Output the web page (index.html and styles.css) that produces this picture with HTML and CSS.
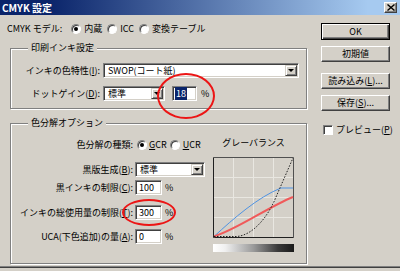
FILE: index.html
```html
<!DOCTYPE html>
<html lang="ja">
<head>
<meta charset="utf-8">
<title>CMYK 設定</title>
<link rel="stylesheet" href="styles.css">
</head>
<body>
<div class="window">
  <div class="titlebar">
    <span class="title">CMYK 設定</span>
    <span class="close"><svg width="8" height="7" viewBox="0 0 8 7"><path d="M0.5 0.5 L7.5 6.5 M7.5 0.5 L0.5 6.5" stroke="#000" stroke-width="1.4" fill="none"/></svg></span>
  </div>
  <div class="content">
    <div class="main">
      <div class="model-row">
        <span>CMYK モデル:</span>
        <span class="opt opt-first"><span class="radio checked"></span><span>内蔵</span></span>
        <span class="opt"><span class="radio"></span><span>ICC</span></span>
        <span class="opt"><span class="radio"></span><span>変換テーブル</span></span>
      </div>

      <fieldset class="group group-ink">
        <legend>印刷インキ設定</legend>
        <div class="form-ink">
          <label class="lbl">インキの色特性(<u>I</u>):</label>
          <div class="combo combo-wide"><span class="combo-text">SWOP(コート紙)</span><span class="drop"></span></div>
          <label class="lbl">ドットゲイン(<u>D</u>):</label>
          <div class="ctrl-line">
            <div class="combo combo-dot"><span class="combo-text">標準</span><span class="drop"></span></div>
            <div class="field field-dot"><span class="sel">18</span></div>
            <span class="pct pct-dot">%</span>
          </div>
        </div>
      </fieldset>

      <fieldset class="group group-sep">
        <legend>色分解オプション</legend>
        <div class="sep-body">
          <div class="form-sep">
            <div class="row row-radio">
              <span class="lbl lbl-sep">色分解の種類:</span>
              <span class="opt opt-sep"><span class="radio checked"></span><span><u>G</u>CR</span></span>
              <span class="opt opt-sep2"><span class="radio"></span><span><u>U</u>CR</span></span>
            </div>
            <div class="row row-b">
              <span class="lbl lbl-sep">黒版生成(<u>B</u>):</span>
              <div class="combo combo-black"><span class="combo-text">標準</span><span class="drop"></span></div>
            </div>
            <div class="row row-c">
              <span class="lbl lbl-sep">黒インキの制限(<u>C</u>):</span>
              <div class="field field-num">100</div>
              <span class="pct">%</span>
            </div>
            <div class="row row-t">
              <span class="lbl lbl-sep">インキの総使用量の制限(<u>T</u>):</span>
              <div class="field field-num">300</div>
              <span class="pct">%</span>
            </div>
            <div class="row row-a">
              <span class="lbl lbl-sep">UCA(下色追加)の量(<u>A</u>):</span>
              <div class="field field-num">0</div>
              <span class="pct">%</span>
            </div>
          </div>
          <div class="balance">
            <div class="balance-title">グレーバランス</div>
            <svg class="graph" width="81" height="81" viewBox="0 0 81 81">
              <rect x="0" y="0" width="81" height="81" fill="#d4d0c8"/>
              <g stroke="#e9e7e1" stroke-width="1">
                <line x1="20.5" y1="1" x2="20.5" y2="80"/>
                <line x1="40.5" y1="1" x2="40.5" y2="80"/>
                <line x1="60.5" y1="1" x2="60.5" y2="80"/>
                <line x1="1" y1="20.5" x2="80" y2="20.5"/>
                <line x1="1" y1="40.5" x2="80" y2="40.5"/>
                <line x1="1" y1="60.5" x2="80" y2="60.5"/>
              </g>
              <path d="M0.5 0.5 H80.5 V80.5" fill="none" stroke="#505050"/>
              <path d="M0.5 0.5 V80.5 H80.5" fill="none" stroke="#202020"/>
              <path d="M1 79.5 C20 62, 45 40, 68 31 L80 31" fill="none" stroke="#4f93e3" stroke-width="1"/>
              <path d="M1 79.5 C25 72, 55 50, 80 40" fill="none" stroke="#f05a5a" stroke-width="2"/>
              <path d="M1 79.5 L24 79.5 C40 78, 55 60, 63 40 L80 1" fill="none" stroke="#202020" stroke-width="1" stroke-dasharray="1.5 1.5"/>
            </svg>
            <div class="ramp"></div>
          </div>
        </div>
      </fieldset>
    </div>

    <div class="side">
      <div class="btn btn-default">OK</div>
      <div class="btn btn-reset">初期値</div>
      <div class="btn btn-load">読み込み(<u>L</u>)...</div>
      <div class="btn btn-save">保存(<u>S</u>)...</div>
      <div class="check-row"><span class="check"></span><span>プレビュー(<u>P</u>)</span></div>
    </div>
  </div>

  <span class="ring ring-dot"></span>
  <span class="ring ring-total"></span>
</div>
</body>
</html>
```

FILE: styles.css
```css
* { box-sizing: border-box; }

html, body {
  margin: 0;
  padding: 0;
  background: #d4d0c8;
}

body {
  font-family: "Noto Sans CJK JP", "Noto Sans", sans-serif;
  font-size: 9px;
  line-height: 12px;
  color: #000;
}

u { text-decoration: underline; text-underline-offset: 1px; }

.window {
  position: relative;
  width: 400px;
  height: 268px;
  background: #d4d0c8;
  border-bottom: 1px solid #404040;
  box-shadow: inset 0 -1px 0 #808080;
}

.titlebar {
  height: 15px;
  display: flex;
  align-items: center;
  justify-content: space-between;
  padding: 0 3px 0 2px;
  background: linear-gradient(90deg, #0a246a 0%, #0a246a 12%, #a6caf0 92%);
}

.title {
  color: #fff;
  font-weight: bold;
  font-size: 10px;
  line-height: 12px;
}

.close {
  width: 13px;
  height: 11px;
  display: flex;
  align-items: center;
  justify-content: center;
  background: #d4d0c8;
  border: 1px solid;
  border-color: #fff #404040 #404040 #fff;
  box-shadow: inset -1px -1px 0 #808080;
}

.content { display: flex; }

.main {
  width: 300px;
  margin-left: 7px;
}

.model-row {
  display: flex;
  align-items: center;
  height: 12px;
  margin-top: 8px;
}

.opt {
  display: flex;
  align-items: center;
  gap: 3px;
  margin-left: 5px;
}

.opt-first { margin-left: 9px; }

.radio {
  flex: none;
  width: 10px;
  height: 10px;
  border-radius: 50%;
  background: #fff;
  border: 1px solid;
  border-color: #808080 #fff #fff #808080;
  box-shadow: inset 1px 1px 0 #404040;
  display: flex;
  align-items: center;
  justify-content: center;
}

.radio.checked::after {
  content: "";
  width: 4px;
  height: 4px;
  border-radius: 50%;
  background: #000;
}

/* group boxes */
.group {
  margin: 0 0 0 3px;
  padding: 0;
  min-width: 0;
  width: 297px;
  border: 1px solid #808080;
  box-shadow: inset 1px 1px 0 #fff, 1px 1px 0 #fff;
}

.group legend {
  margin-left: 17px;
  padding: 0 3px;
  height: 12px;
  line-height: 12px;
  background: #d4d0c8;
}

.group-ink { margin-top: 7px; }
.group-sep { margin-top: 8px; }

.form-ink {
  display: grid;
  grid-template-columns: 89px auto;
  column-gap: 3px;
  row-gap: 8px;
  align-items: center;
  padding: 9px 0 7px;
}

.lbl {
  text-align: right;
  white-space: nowrap;
}

.ctrl-line {
  display: flex;
  align-items: center;
}

/* combo boxes and fields */
.combo {
  display: flex;
  align-items: center;
  height: 15px;
  background: #fff;
  border: 1px solid;
  border-color: #808080 #fff #fff #808080;
  box-shadow: inset 1px 1px 0 #404040, inset -1px -1px 0 #d4d0c8;
}

.combo-wide { width: 196px; }
.combo-dot { width: 62px; }
.combo-black { width: 70px; }

.combo-text {
  flex: 1;
  padding-left: 4px;
  line-height: 13px;
  white-space: nowrap;
  overflow: hidden;
}

.drop {
  flex: none;
  width: 12px;
  height: 11px;
  margin-right: 1px;
  display: flex;
  align-items: center;
  justify-content: center;
  background: #d4d0c8;
  border: 1px solid;
  border-color: #d4d0c8 #404040 #404040 #d4d0c8;
  box-shadow: inset 1px 1px 0 #fff, inset -1px -1px 0 #808080;
}

.drop::after {
  content: "";
  border-left: 3px solid transparent;
  border-right: 3px solid transparent;
  border-top: 3px solid #000;
}

.field {
  height: 15px;
  background: #fff;
  border: 1px solid;
  border-color: #808080 #fff #fff #808080;
  box-shadow: inset 1px 1px 0 #404040, inset -1px -1px 0 #d4d0c8;
  padding-left: 3px;
  line-height: 13px;
}

.field-dot {
  width: 25px;
  margin-left: 7px;
  padding-left: 2px;
}

.sel {
  background: #0a246a;
  color: #fff;
  padding: 0 1px;
}

.field-num { width: 27px; }

.pct { margin-left: 3px; }
.pct-dot { margin-left: 4px; }

/* color separation */
.sep-body {
  display: flex;
  align-items: flex-start;
  padding-bottom: 11px;
}

.form-sep {
  width: 202px;
  margin-top: 10px;
  display: flex;
  flex-direction: column;
}

.row {
  display: flex;
  align-items: center;
  height: 15px;
}

.row-radio { height: 12px; }
.row-b { margin-top: 11px; }
.row-c { margin-top: 3px; }
.row-t { margin-top: 10px; }
.row-a { margin-top: 9px; }

.lbl-sep {
  width: 122px;
  margin-right: 2px;
}

.opt-sep { margin-left: 2px; gap: 2px; }
.opt-sep2 { margin-left: 3px; gap: 3px; }

.balance {
  width: 81px;
  margin-top: 8px;
  display: flex;
  flex-direction: column;
  align-items: center;
}

.balance-title {
  height: 12px;
  white-space: nowrap;
}

.graph {
  display: block;
  margin-top: 8px;
}

.ramp {
  width: 81px;
  height: 8px;
  margin-top: 6px;
  background: linear-gradient(90deg, #ffffff 0%, #f0f0f0 15%, #9a9a9a 50%, #3a3a3a 80%, #1a1a1a 100%);
}

/* right column */
.side {
  width: 69px;
  margin-left: 14px;
  display: flex;
  flex-direction: column;
}

.btn {
  height: 16px;
  display: flex;
  align-items: center;
  justify-content: center;
  white-space: nowrap;
  background: #d4d0c8;
  border: 1px solid;
  border-color: #fff #404040 #404040 #fff;
  box-shadow: inset -1px -1px 0 #808080;
}

.btn-default {
  height: 17px;
  margin-top: 8px;
  border: 1px solid #000;
  box-shadow: inset 1px 1px 0 #fff, inset -1px -1px 0 #404040, inset -2px -2px 0 #808080;
}

.btn-reset { margin-top: 6px; }
.btn-load { margin-top: 11px; }
.btn-save { margin-top: 6px; }

.check-row {
  display: flex;
  align-items: center;
  gap: 3px;
  margin-top: 13px;
  margin-left: 2px;
  white-space: nowrap;
}

.check {
  flex: none;
  width: 10px;
  height: 10px;
  background: #fff;
  border: 1px solid;
  border-color: #808080 #fff #fff #808080;
  box-shadow: inset 1px 1px 0 #404040;
}

/* red annotation rings drawn over the dialog */
.ring {
  position: absolute;
  border: 2px solid #ec1515;
  border-radius: 50%;
}

.ring-dot {
  left: 157px;
  top: 73px;
  width: 58px;
  height: 46px;
}

.ring-total {
  left: 122px;
  top: 199px;
  width: 54px;
  height: 27px;
}
```
